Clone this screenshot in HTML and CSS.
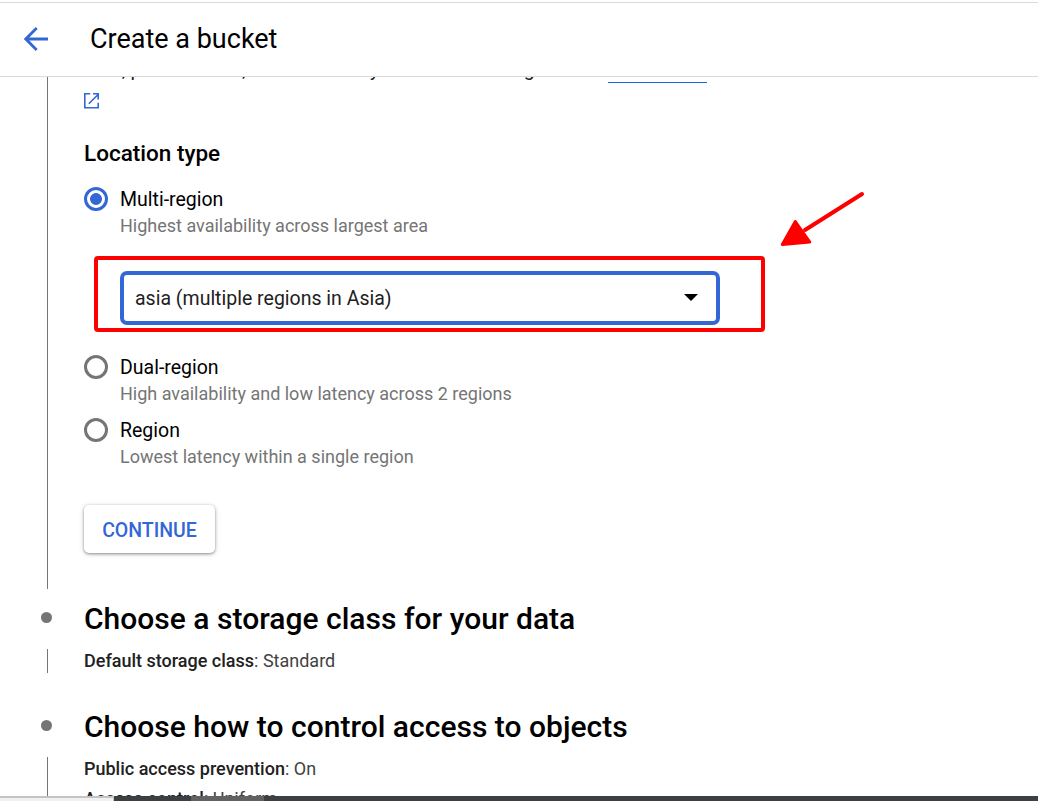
FILE: index.html
```html
<!DOCTYPE html>
<html lang="en">
<head>
<meta charset="utf-8">
<title>Create a bucket</title>
<link rel="stylesheet" href="styles.css">
</head>
<body>
<div class="app">
  <header class="header">
    <svg class="back" width="24" height="24" viewBox="0 0 24 24" fill="none" stroke="#3367d6" stroke-width="2.8"><path d="M24 12H2M12.700 1L1.800 12L12.700 23"/></svg>
    <h1 class="title">Create a bucket</h1>
  </header>
  <main class="steps">
    <section class="step">
      <div class="rail"><span class="line"></span></div>
      <div class="content">
        <p class="intro">cost, performance, and availability. Cannot be changed later. <a class="learn">Learn more</a></p>
        <div class="external"><svg width="16" height="16" viewBox="0 0 16 16" fill="none" stroke="#3367d6" stroke-width="1.600"><path d="M6.200 .8H.8V14.700H14.200V9.700M4.800 10.800L13.600 2M9 .8H14.200V6.500"/></svg></div>
        <h3 class="subhead">Location type</h3>
        <div class="option"><span class="radio checked"></span><div><div class="label">Multi-region</div><div class="hint">Highest availability across largest area</div></div></div>
        <div class="select-wrap">
          <div class="select"><span>asia (multiple regions in Asia)</span><span class="caret"></span></div>
          <div class="highlight"></div>
          <svg class="pointer" width="90" height="60" viewBox="0 0 90 60"><path d="M83 5L26 41" stroke="#f00" stroke-width="4" stroke-linecap="round"/><path d="M16.300 32.500L3.300 55.500L30.800 53Z" fill="#f00" stroke="#f00" stroke-width="3" stroke-linejoin="round"/></svg>
        </div>
        <div class="option"><span class="radio"></span><div><div class="label">Dual-region</div><div class="hint">High availability and low latency across 2 regions</div></div></div>
        <div class="option last"><span class="radio"></span><div><div class="label">Region</div><div class="hint">Lowest latency within a single region</div></div></div>
        <button class="continue">CONTINUE</button>
      </div>
    </section>
    <section class="step-head"><span class="dot"></span><h2>Choose a storage class for your data</h2></section>
    <section class="step summary">
      <div class="rail"><span class="line"></span></div>
      <div class="facts"><p><b>Default storage class</b>: Standard</p></div>
    </section>
    <section class="step-head next"><span class="dot"></span><h2>Choose how to control access to objects</h2></section>
    <section class="step">
      <div class="rail"><span class="line"></span></div>
      <div class="facts"><p><b>Public access prevention</b>: On</p><p><b>Access control</b>: Uniform</p></div>
    </section>
  </main>
  <footer class="bar"><span class="bar-light"></span><span class="bar-dark"></span><span class="bar-mid"></span></footer>
</div>
</body>
</html>
```
FILE: styles.css
```css
* { box-sizing: border-box; }
body { margin: 0; background: #fff; font-family: Roboto, sans-serif; color: #212121; }
h1, h2, h3, p { margin: 0; font-weight: 400; }
.app { height: 801px; display: flex; flex-direction: column; overflow: hidden; }
.header { flex: none; height: 75px; margin-top: 2px; border-top: 1px solid #dadada; border-bottom: 1px solid #dadada; display: flex; align-items: center; padding: 0 0 2px 24px; }
.back { margin-right: 42px; }
.title { font-size: 27px; line-height: 36px; color: #000; }
.steps { flex: 1; min-height: 0; overflow: hidden; }
.step { display: grid; grid-template-columns: 84px 1fr; }
.rail { padding-left: 47px; display: flex; }
.line { width: 1px; background: #757575; }
.content { height: 512px; display: flow-root; }
.intro { font-size: 19.5px; line-height: 30px; margin-top: -22px; white-space: nowrap; }
.learn { color: #1a66e0; padding-bottom: 1px; border-bottom: 1px solid #1a66e0; }
.external { height: 30px; padding-top: 8px; }
.external svg { display: block; }
.subhead { margin: 23px 0 18px; font-size: 22.5px; line-height: 30px; font-weight: 500; color: #000; }
.option { display: flex; height: 54px; }
.option.last { margin-top: 9px; }
.radio { flex: none; width: 24px; height: 24px; margin: 1px 12px 0 0; border: 3px solid #757575; border-radius: 50%; }
.radio.checked { border-color: #3367d6; background: radial-gradient(circle, #3367d6 5.5px, #fff 6.3px); }
.label { font-size: 19.5px; line-height: 27px; color: #000; }
.hint { font-size: 18px; line-height: 25px; color: #757575; }
.select-wrap { position: relative; padding: 31px 0 29px 36px; }
.select { width: 600px; height: 54px; border: 4px solid #3367d6; border-radius: 7px; padding: 0 18px 0 11px; display: flex; align-items: center; justify-content: space-between; font-size: 19.5px; }
.caret { border: 7.5px solid transparent; border-top-color: #000; border-bottom: 0; margin-bottom: 1px; }
.highlight { position: absolute; left: 10px; top: 16px; width: 671px; height: 76px; border: 4px solid #f00; border-radius: 4px; }
.pointer { position: absolute; left: 695px; top: -51px; }
.continue { display: block; margin-top: 34px; width: 131px; height: 48px; padding: 2px 0 0; border: 0; border-radius: 5px; background: #fff; color: #3367d6; font: 500 19.5px Roboto, sans-serif; box-shadow: 0 1px 3px rgba(0,0,0,.4), 0 1px 6px rgba(0,0,0,.12); }
.step-head { height: 60px; display: flex; align-items: center; padding-left: 41px; }
.step-head.next { margin-top: 24px; }
.dot { width: 11px; height: 11px; border-radius: 50%; background: #757575; margin: -4px 32px 0 0; }
h2 { font-size: 30px; line-height: 36px; font-weight: 500; letter-spacing: .015px; color: #000; }
.summary { height: 24px; }
.summary .facts p { margin: 0; }
.facts p { font-size: 18px; line-height: 24px; margin-bottom: 6px; color: #424242; }
.facts b { font-weight: 500; color: #212121; }
.bar { flex: none; height: 5px; background: #3c4043; display: flex; }
.bar-light { width: 114px; background: #f1f1f1; border-top: 2px solid #c4c4c4; border-right: 1px solid #c4c4c4; }
.bar-dark { width: 77px; }
.bar-mid { width: 73px; background: #616263; }
```
